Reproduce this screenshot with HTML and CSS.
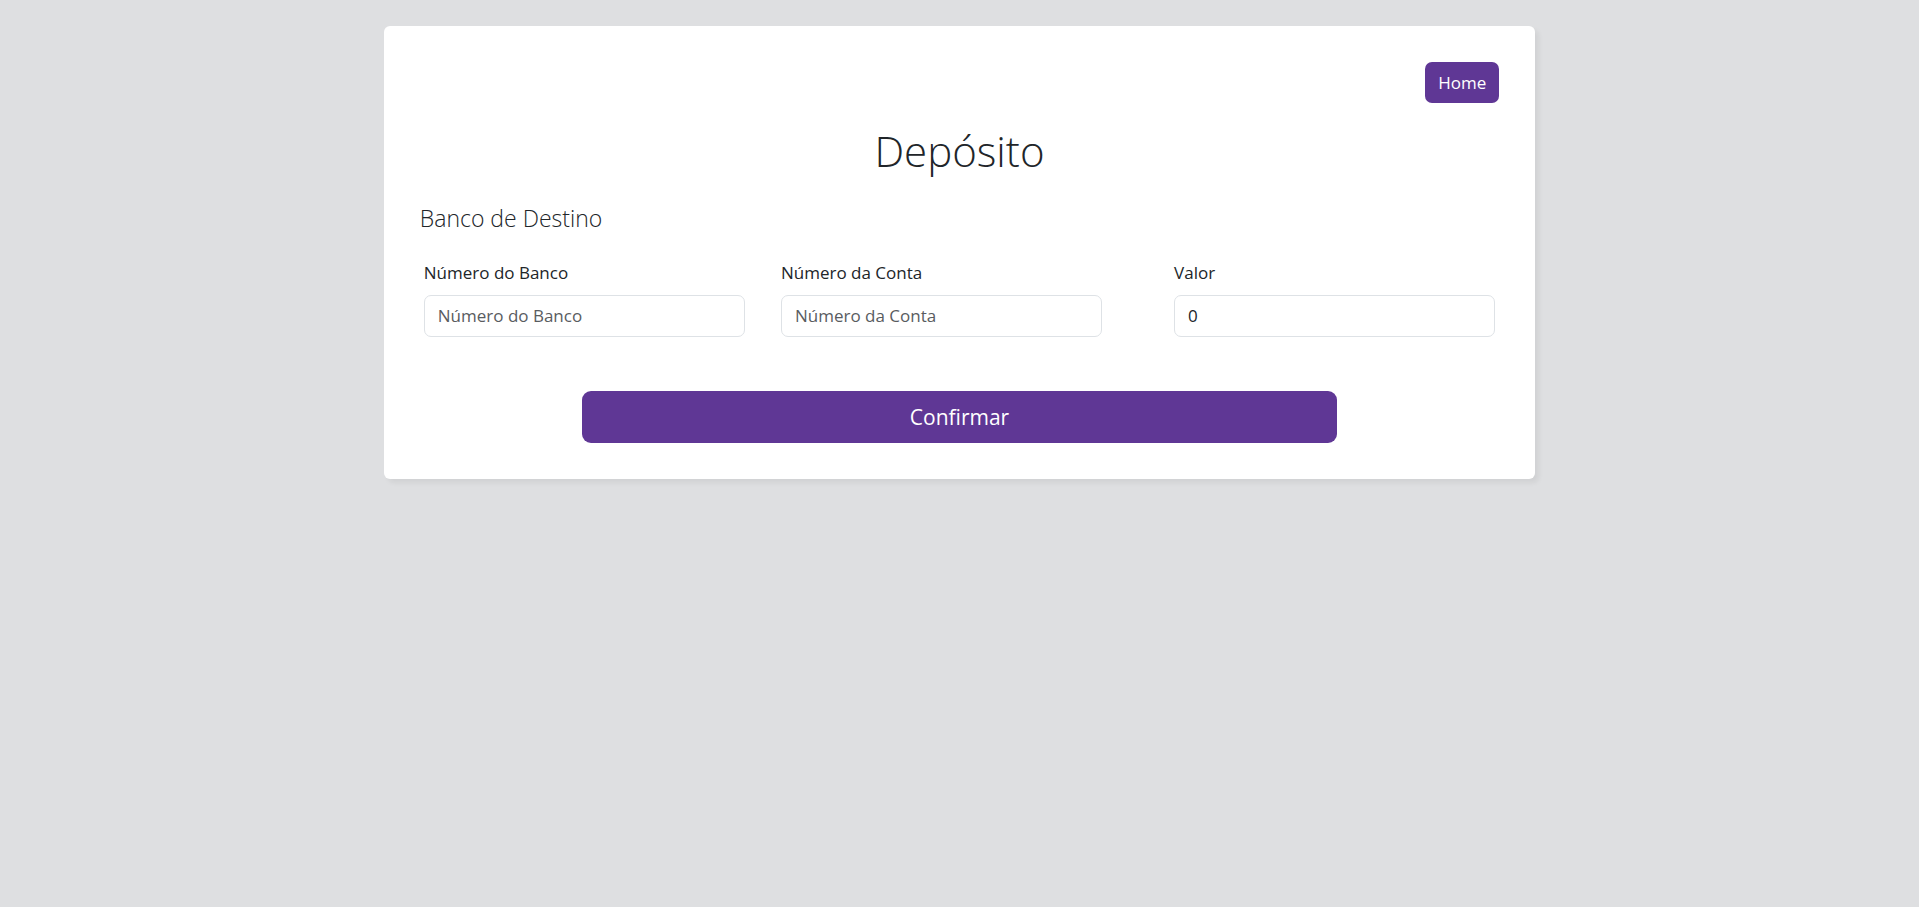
FILE: index.html
```html
<!DOCTYPE html>
<html lang="pt-BR">
<head>
  <meta charset="utf-8">
  <meta name="viewport" content="width=device-width, initial-scale=1">
  <title>Depósito</title>
  <link rel="stylesheet" href="styles.css">
</head>
<body>
  <main class="card">
    <nav class="card-nav">
      <a class="btn btn-home" href="#home">Home</a>
    </nav>
    <h1 class="title">Depósito</h1>
    <h2 class="subtitle">Banco de Destino</h2>
    <form class="form">
      <div class="fields">
        <div class="field">
          <label class="label" for="banco">Número do Banco</label>
          <input class="input" id="banco" type="text" placeholder="Número do Banco">
        </div>
        <div class="field">
          <label class="label" for="conta">Número da Conta</label>
          <input class="input" id="conta" type="text" placeholder="Número da Conta">
        </div>
        <div class="field field-value">
          <label class="label" for="valor">Valor</label>
          <input class="input" id="valor" type="text" inputmode="decimal" value="0">
        </div>
      </div>
      <button class="btn btn-confirm" type="submit">Confirmar</button>
    </form>
  </main>
</body>
</html>
```

FILE: styles.css
```css
* {
  box-sizing: border-box;
}

body {
  margin: 0;
  padding: 26px 0;
  background: #dedfe1;
  color: #212529;
  font-family: "Segoe UI", "Open Sans", "Noto Sans", sans-serif;
  font-size: 17px;
  line-height: 27px;
}

.card {
  width: 60%;
  margin: 0 auto;
  padding: 36px;
  border-radius: 6px;
  background: #fff;
  box-shadow: 4px 4px 5px rgba(0, 0, 0, 0.06);
}

.card-nav {
  display: flex;
  justify-content: flex-end;
}

.btn {
  border: 0;
  background: #5f3795;
  color: #fff;
  font-family: inherit;
  text-align: center;
  text-decoration: none;
  cursor: pointer;
}

.btn-home {
  padding: 7px 13px;
  border-radius: 7px;
}

.title {
  margin: 21px 0 24px;
  font-size: 42px;
  font-weight: 300;
  line-height: 54px;
  text-align: center;
}

.subtitle {
  margin: 0 0 25px;
  font-size: 23px;
  font-weight: 300;
  line-height: 32px;
}

.form {
  display: flex;
  flex-direction: column;
}

.fields {
  display: flex;
  gap: 36px;
  padding: 0 4px;
}

.field {
  flex: 1;
  min-width: 0;
}

.field-value {
  margin-left: 36px;
}

.label {
  display: block;
  margin-bottom: 9px;
}

.input {
  display: block;
  width: 100%;
  padding: 6px 13px;
  border: 1px solid #dee2e6;
  border-radius: 7px;
  background: #fff;
  color: inherit;
  font-family: inherit;
  font-size: inherit;
  line-height: 28px;
}

.input::placeholder {
  color: #595c5f;
  opacity: 1;
}

.btn-confirm {
  align-self: center;
  width: 70%;
  margin-top: 54px;
  padding: 9px 18px;
  border-radius: 9px;
  font-size: 21px;
  line-height: 34px;
}
```
